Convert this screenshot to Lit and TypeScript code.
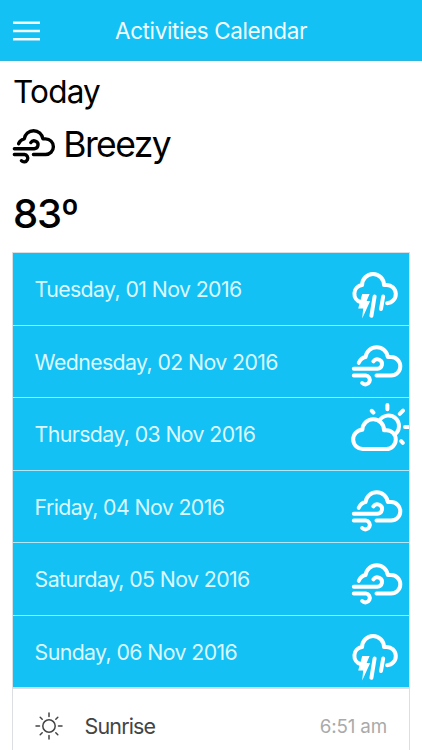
import { LitElement, html, svg, css } from "lit";
import { customElement, property } from "lit/decorators.js";

type Kind = "storm" | "wind" | "partly";

const storm = svg`
  <path d="M9.8 49.2A8.8 8.8 0 0 1 11.1 32A10.95 10.95 0 0 1 33 32H35.2A9.1 9.1 0 0 1 36.2 50.2"/>
  <path d="M23.6 43.5L20.4 62.8M32.2 43.5L30 56"/>
  <path class="solid" d="M11.2 41H18.6L15.6 48H19.2L11.2 65.5L12.2 55.6H7.2Z"/>`;

const wind = svg`
  <path d="M7.8 37.8Q10 32.8 14.6 32A11.2 11.2 0 0 1 36.8 32H40A9.3 9.3 0 0 1 40 50.6H25.5"/>
  <path d="M2.8 43.7H26A4.7 4.7 0 1 0 22.4 36.4"/>
  <path d="M2.8 50.6H14.8A4.4 4.4 0 1 1 11.2 58"/>`;

const partly = svg`
  <path d="M11.4 31.8A10.8 10.8 0 0 1 33 32.2H35.4A9.4 9.4 0 0 1 35.4 51H12.2A9.6 9.6 0 0 1 11.4 31.8Z"/>
  <path d="M28.6 22.4A10.5 10.5 0 1 1 43.8 36.4"/>
  <path d="M36.4 7V11.2M52 12.6L48.8 15.8M54 29H58M50.2 43.2L51.8 44.8M20.8 12.8L22.4 14.6"/>`;

const shapes = { storm, wind, partly };

@customElement("weather-icon")
class WeatherIcon extends LitElement {
  @property() kind: Kind = "wind";
  static styles = css`
    :host { display: block; }
    svg { display: block; width: 100%; height: 100%; fill: none; stroke: currentColor; stroke-width: 4; stroke-linecap: round; stroke-linejoin: round; }
    .solid { fill: currentColor; stroke: none; }
  `;
  render() {
    return html`<svg viewBox="0 0 58 72">${shapes[this.kind]}</svg>`;
  }
}

@customElement("app-root")
class AppRoot extends LitElement {
  static styles = css`
    :host { display: block; height: 750px; overflow: hidden; background: #fff; font-family: Inter, "Liberation Sans", sans-serif; color: #000; }
    * { box-sizing: border-box; }
    header { height: 61px; background: #13c1f5; border-bottom: 1px solid #2bb5df; display: grid; grid-template-columns: 60px 1fr 60px; align-items: center; color: #f2fcff; }
    .menu { display: block; width: 27px; height: 20px; margin: 1px 0 0 13px; stroke: #effcff; stroke-width: 2.5; }
    h1, h2, p { margin: 0; font-weight: 400; white-space: nowrap; }
    h1 { font-size: 22.5px; letter-spacing: -0.38px; text-align: center; line-height: 28px; padding-top: 1px; }
    .now { height: 192px; padding: 11px 0 0 13px; }
    .today { font-size: 31.5px; line-height: 40px; letter-spacing: -0.8px; }
    .state { display: flex; height: 63px; font-size: 35.5px; line-height: 65px; letter-spacing: -1.6px; }
    .state weather-icon { width: 48.7px; height: 60.5px; margin: 0 2.6px 0 -1px; }
    .temp { font-size: 40px; font-weight: 500; line-height: 78px; letter-spacing: -1.3px; }
    .card { margin: -1px 12px 0; border: solid #dcdfe1; border-width: 1px 1px 0; }
    .row { height: 72.5px; display: flex; justify-content: space-between; align-items: center; background: #13c1f5; color: #dcf8ff; border-bottom: 1px solid #b5e6f6; padding-left: 21.6px; font-size: 21.3px; letter-spacing: -0.6px; white-space: nowrap; }
    .row span { padding-top: 1px; }
    .row weather-icon { width: 58px; height: 72px; color: #fff; flex: none; }
    .sun { height: 75px; display: flex; align-items: center; border-top: 1px solid #dcdfe1; padding: 0 22px; color: #444; font-size: 21.5px; }
    .sun svg { width: 28px; height: 28px; fill: none; stroke: #444; stroke-width: 1.5; stroke-linecap: round; }
    .name { flex: 1; padding-left: 21.5px; letter-spacing: -0.85px; }
    .time { color: #aaa; font-size: 18.8px; letter-spacing: -0.15px; }
  `;

  private days: [string, Kind][] = [
    ["Tuesday, 01 Nov 2016", "storm"],
    ["Wednesday, 02 Nov 2016", "wind"],
    ["Thursday, 03 Nov 2016", "partly"],
    ["Friday, 04 Nov 2016", "wind"],
    ["Saturday, 05 Nov 2016", "wind"],
    ["Sunday, 06 Nov 2016", "storm"],
  ];

  render() {
    return html`
      <header>
        <svg class="menu" viewBox="0 0 27 20"><path d="M0 1.8H27M0 10.1H27M0 18.3H27"/></svg>
        <h1>Activities Calendar</h1>
      </header>
      <section class="now">
        <h2 class="today">Today</h2>
        <div class="state"><weather-icon kind="wind"></weather-icon><span>Breezy</span></div>
        <p class="temp">83º</p>
      </section>
      <section class="card">
        ${this.days.map(([label, kind]) => html`
          <div class="row"><span>${label}</span><weather-icon .kind=${kind}></weather-icon></div>`)}
        <div class="sun">
          <svg viewBox="-14 -14 28 28">
            <circle r="6.2"/>
            <path d="M0 -13V-9.5M0 9.5V13M-13 0H-9.5M9.5 0H13M-8.8 -8.8L-6.8 -6.8M8.8 -8.8L6.8 -6.8M-8.8 8.8L-6.8 6.8M8.8 8.8L6.8 6.8"/>
          </svg>
          <span class="name">Sunrise</span><span class="time">6:51 am</span>
        </div>
      </section>`;
  }
}
